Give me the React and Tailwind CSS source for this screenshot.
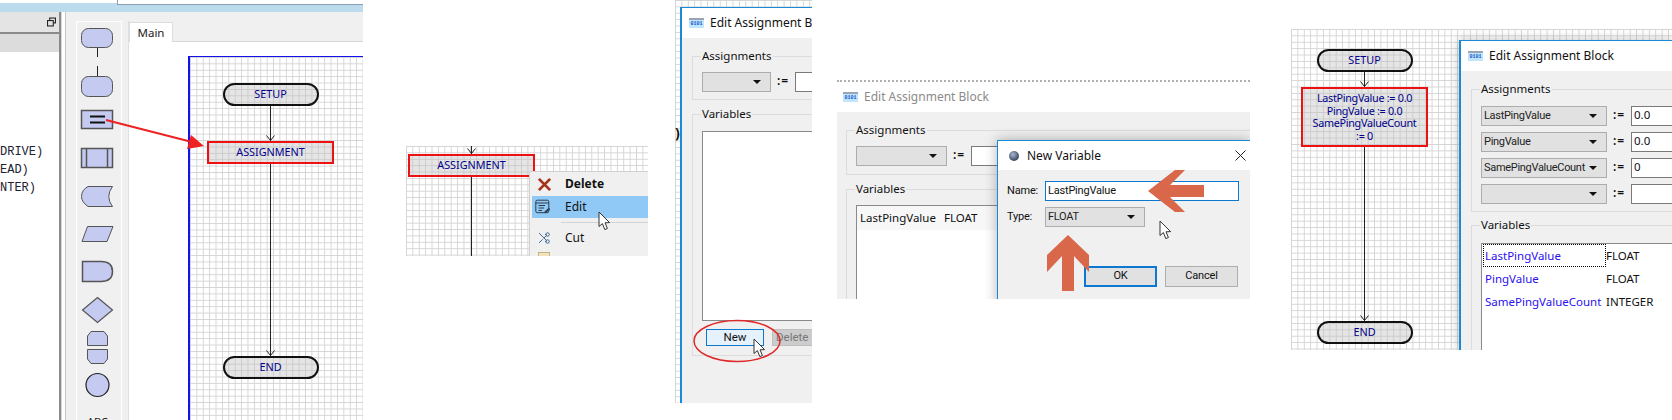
import { Scissors } from 'lucide-react';

const grid =
  'bg-white bg-[linear-gradient(#d4d4d4_1px,transparent_1px),linear-gradient(90deg,#d4d4d4_1px,transparent_1px)] bg-[size:6.4px_6.4px]';

function Cursor({ className }) {
  return (
    <svg viewBox="0 0 13 20" className={`absolute h-[20px] w-[13px] ${className}`}>
      <path
        d="M1 1 L1 15.5 L4.4 12.6 L6.8 18.6 L9.4 17.5 L7 11.8 L11.6 11.6 Z"
        fill="#fff"
        stroke="#333"
        strokeWidth="1"
        strokeLinejoin="round"
      />
    </svg>
  );
}

function Pill({ children }) {
  return (
    <div className="flex h-[23px] w-[96px] items-center justify-center rounded-full border-2 border-[#111] bg-[#bdbdbd]/40 text-[10.8px] text-[#00008b]">
      {children}
    </div>
  );
}

function Connector({ className }) {
  return (
    <div className={`relative w-px bg-[#222] ${className}`}>
      <svg viewBox="0 0 9 6" className="absolute bottom-0 -left-[4px] h-[6px] w-[9px]">
        <path d="M0.5 0.5 L4.5 5.5 L8.5 0.5" fill="none" stroke="#222" strokeWidth="1" />
      </svg>
    </div>
  );
}

function AssignBox({ className, children }) {
  return (
    <div
      className={`flex w-[127px] flex-col items-center justify-center border-2 border-[#ee1111] bg-[#bdbdbd]/40 text-[10.8px] text-[#00008b] ${className}`}
    >
      {children}
    </div>
  );
}

function Palette() {
  const f = '#c5caf0';
  const s = '#555';
  return (
    <svg viewBox="0 0 45 398" className="h-[398px] w-[45px] overflow-visible">
      <g fill={f} stroke={s} strokeWidth="1">
        <rect x="4.5" y="6.5" width="31" height="19" rx="7" />
        <path d="M20.5 26 V35" stroke="#222" />
        <path d="M20.5 44 V54" stroke="#222" />
        <rect x="4.5" y="54.5" width="31" height="20" rx="7" />
        <rect x="4.5" y="88.5" width="31" height="18" strokeWidth="1.5" />
        <path d="M13 94.5 H28 M13 100.5 H28" stroke="#111" strokeWidth="2" />
        <rect x="4.5" y="126.5" width="31" height="19" strokeWidth="1.5" />
        <path d="M9.5 127 V145 M30.5 127 V145" strokeWidth="1.5" />
        <path d="M11 164.5 H35.5 Q28 174.5 35.5 184.5 H11 Q4.5 180 4.5 174.5 Q4.5 168 11 164.5 Z" />
        <path d="M10.5 204.5 H36 L30 219.5 H5 Z" />
        <path d="M5.5 239.5 H24 Q35.5 239.5 35.5 249.5 Q35.5 259.5 24 259.5 H5.5 Z" strokeWidth="1.5" />
        <path d="M20.5 275.5 L35.5 288 L20.5 300.5 L5.5 288 Z" strokeWidth="1.2" />
        <path d="M10.5 323.5 V314 L14 309.5 H27 L30.5 314 V323.5 Z" />
        <path d="M10.5 327.5 H30.5 V337 L27 341.5 H14 L10.5 337 Z" />
        <circle cx="20.5" cy="363" r="11.5" strokeWidth="1.2" stroke="#222" />
      </g>
      <text x="20.5" y="404" textAnchor="middle" fontSize="11" fill="#222">ABC</text>
    </svg>
  );
}

function DialogIcon() {
  return (
    <div className="flex h-[10px] w-[15px] shrink-0 items-center justify-center border-t-2 border-t-[#9aa4b4] bg-[#bfe6fb] font-['Liberation_Mono',monospace] text-[5px] leading-none font-bold text-[#1a50d0]">
      0101
    </div>
  );
}

function Select({ className, children }) {
  return (
    <div className={`flex h-[20px] items-center justify-between border border-[#adadad] bg-[#e1e1e1] pr-[9px] pl-[2px] font-['Roboto',sans-serif] text-[11px] tracking-[-0.3px] whitespace-nowrap text-[#222] ${className}`}>
      <span>{children}</span>
      <svg viewBox="0 0 8 4" className="h-[4px] w-[8px] shrink-0">
        <path d="M0 0 H8 L4 4 Z" fill="#111" />
      </svg>
    </div>
  );
}

function Assign() {
  return <div className="w-[11px] shrink-0 pb-[2px] text-[12px] leading-[14px] font-semibold tracking-[1px] text-[#111]">:=</div>;
}

function GroupLegend({ children }) {
  return (
    <span className="absolute -top-[9px] left-[8px] bg-[#f0f0f0] px-px text-[11.5px] leading-[16px] text-[#111]">
      {children}
    </span>
  );
}

function Arrow({ points }) {
  return (
    <svg viewBox="0 0 1672 420" className="pointer-events-none absolute top-0 left-0 h-[420px] w-[1672px]">
      <polygon points={points} fill="#d9674a" />
    </svg>
  );
}

function AppPanel() {
  return (
    <div className="absolute top-0 left-0 flex h-[420px] w-[363px] flex-col overflow-hidden">
      <div className="flex h-[12px] shrink-0 bg-[#bcdcee]">
        <div className="h-[3px] w-[117px] bg-white" />
        <div className="h-[5px] flex-1 border-b border-l border-[#8aa0b0] bg-white" />
      </div>
      <div className="flex h-[408px] shrink-0">
        <div className="flex w-[61px] shrink-0 flex-col border-r-2 border-[#8a8a8a] bg-white">
          <div className="flex h-[20px] shrink-0 items-center justify-end bg-[#e4e4e4] pr-[3px]">
            <svg viewBox="0 0 10 10" className="h-[10px] w-[9px]" fill="none" stroke="#222" strokeWidth="1.2">
              <rect x="3" y="0.6" width="6.4" height="5.4" />
              <rect x="0.6" y="3.4" width="6.4" height="6" fill="#e4e4e4" />
            </svg>
          </div>
          <div className="h-[2px] shrink-0 bg-[#8a8a8a]" />
          <div className="h-[18px] shrink-0 bg-[#dcdcdc]" />
          <div className="flex flex-col pt-[91px] font-['Liberation_Mono',monospace] text-[12px] leading-[18px] text-[#223]">
            <span>DRIVE)</span>
            <span>EAD)</span>
            <span>NTER)</span>
          </div>
        </div>
        <div className="flex flex-1 border-l border-[#d8d8d8] bg-white">
          <div className="ml-[3px] flex flex-1 border-l border-[#8a8a8a]/40 bg-[#f0f0f0] pt-[9px] pl-[10px]">
            <div className="h-[399px] w-[46px] shrink-0 border-x border-t border-white">
              <Palette />
            </div>
            <div className="ml-[6px] flex flex-1 flex-col border-l border-[#e0e0e0] bg-[#f0f0f0] pt-[1px]">
              <div className="flex h-[20px] shrink-0">
                <div className="flex w-[44px] items-center justify-center border-x border-t border-[#dcdcdc] bg-white text-[11.5px] text-[#222]">
                  Main
                </div>
                <div className="flex-1 border-b border-[#d8d8d8]" />
              </div>
              <div className="flex-1 bg-white pt-[14px] pl-[59px]">
                <div className={`h-[364px] border-t border-l-2 border-t-[#1010f0] border-l-[#1010f0] pt-[26px] pl-[17px] ${grid}`}>
                  <div className="flex w-[127px] flex-col items-center">
                    <Pill>SETUP</Pill>
                    <Connector className="h-[35px]" />
                    <AssignBox className="h-[23px]">ASSIGNMENT</AssignBox>
                    <Connector className="h-[192px]" />
                    <Pill>END</Pill>
                  </div>
                </div>
              </div>
            </div>
          </div>
        </div>
      </div>
      <svg viewBox="0 0 363 420" className="absolute top-0 left-0 h-[420px] w-[363px]">
        <path d="M106 120 L192 142" stroke="#ee2222" strokeWidth="2" />
        <polygon points="204,146 191,135 187,149" fill="#ee2222" />
      </svg>
    </div>
  );
}

function MenuPanel() {
  return (
    <div className={`absolute top-[146px] left-[406px] h-[110px] w-[242px] overflow-hidden ${grid}`}>
      <div className="ml-[2px] flex w-[127px] flex-col items-center">
        <Connector className="h-[8px]" />
        <AssignBox className="h-[23px]">ASSIGNMENT</AssignBox>
        <div className="h-[80px] w-px bg-[#222]" />
      </div>
      <div className="absolute top-[25px] left-[123px] flex h-[85px] w-[119px] flex-col border-t border-l border-[#d0d0d0] bg-[#f0f0f0] pl-[2px] text-[12px] text-[#111]">
        <div className="flex h-[24px] shrink-0 items-center">
          <svg viewBox="0 0 16 16" className="ml-[5px] h-[15px] w-[15px]">
            <path d="M2 2 L14 14 M14 2 L2 14" stroke="#a8321c" strokeWidth="3" />
          </svg>
          <span className="ml-[13px] font-bold">Delete</span>
        </div>
        <div className="flex h-[22px] shrink-0 items-center bg-[#90c8f6]">
          <svg viewBox="0 0 16 16" className="ml-[3px] h-[16px] w-[16px]" fill="none" stroke="#2e3b4a" strokeWidth="1">
            <rect x="0.8" y="1.2" width="13" height="12.5" rx="1.5" />
            <path d="M0.8 4 H13.8 M3.5 6.5 H10 M3.5 9 H9 M3.5 11.5 H7" />
            <path d="M10 13.5 L14.5 9.5" strokeWidth="2" />
          </svg>
          <span className="ml-[14px]">Edit</span>
        </div>
        <div className="mt-[4px] ml-[29px] h-px shrink-0 bg-[#d4d4d4]" />
        <div className="mt-[4px] flex h-[22px] shrink-0 items-center">
          <Scissors className="ml-[5px] h-[14px] w-[14px] -scale-x-100 text-[#35618c]" strokeWidth={1.6} />
          <span className="ml-[14px]">Cut</span>
        </div>
        <div className="mt-[3px] ml-[6px] h-[10px] w-[12px] shrink-0 border border-[#c9b27a] bg-[#efe3c0]" />
      </div>
      <Cursor className="top-[65px] left-[192px]" />
    </div>
  );
}

function EmptyDialogPanel() {
  return (
    <div className={`absolute top-0 left-[675px] h-[403px] w-[137px] overflow-hidden ${grid}`}>
      <span className="absolute top-[122px] left-0 text-[14px] font-bold text-[#111]">)</span>
      <div className="absolute top-[7px] left-[5px] flex h-[396px] w-[140px] flex-col border-t border-l-2 border-[#1a8ad8] bg-white">
        <div className="flex h-[30px] shrink-0 items-center gap-[6px] pl-[7px] text-[12px] whitespace-nowrap text-[#111]">
          <DialogIcon />
          <span>Edit Assignment Block</span>
        </div>
        <div className="min-h-0 flex-1 bg-[#f0f0f0] pt-[18px] pl-[10px]">
          <div className="relative h-[44px] border border-r-0 border-[#dcdcdc] pt-[15px] pl-[9px]">
            <GroupLegend>Assignments</GroupLegend>
            <div className="flex items-center">
              <Select className="w-[69px] shrink-0" />
              <div className="ml-[6px]"><Assign /></div>
              <div className="ml-[7px] h-[20px] w-[40px] shrink-0 border border-[#7a7a7a] bg-white" />
            </div>
          </div>
          <div className="relative mt-[14px] h-[242px] border border-r-0 border-[#dcdcdc] pt-[16px] pl-[9px]">
            <GroupLegend>Variables</GroupLegend>
            <div className="h-[190px] border border-r-0 border-[#8a8a8a] bg-white" />
            <div className="mt-[8px] flex gap-[8px] pl-[4px] font-['Roboto',sans-serif] text-[11.5px]">
              <div className="flex h-[17px] w-[58px] shrink-0 items-center justify-center border border-[#0d78d0] bg-[#e5f1fb] text-[#111]">New</div>
              <div className="flex h-[17px] w-[50px] shrink-0 items-center border border-[#bfbfbf] bg-[#cccccc] pl-[3px] text-[#777]">Delete</div>
            </div>
          </div>
        </div>
      </div>
      <svg viewBox="0 0 137 403" className="absolute top-0 left-0 h-[403px] w-[137px]">
        <ellipse cx="62" cy="341" rx="43" ry="20.5" fill="none" stroke="#e02828" strokeWidth="1.5" />
      </svg>
      <Cursor className="top-[338px] left-[78px]" />
    </div>
  );
}

function NewVariablePanel() {
  return (
    <div className="absolute top-[80px] left-[837px] flex h-[219px] w-[413px] flex-col overflow-hidden border-t-2 border-dotted border-t-[#b0b0b0]">
      <div className="flex h-[30px] shrink-0 items-center gap-[6px] bg-white pl-[6px] text-[12px] text-[#8a8a8a]">
        <DialogIcon />
        <span>Edit Assignment Block</span>
      </div>
      <div className="relative min-h-0 flex-1 bg-[#f0f0f0] pt-[18px] pl-[9px]">
        <div className="relative h-[45px] border border-r-0 border-[#dcdcdc] pt-[15px] pl-[9px]">
          <GroupLegend>Assignments</GroupLegend>
          <div className="flex items-center">
            <Select className="w-[91px] shrink-0" />
            <div className="ml-[6px]"><Assign /></div>
            <div className="ml-[7px] h-[20px] w-[40px] border border-[#7a7a7a] bg-white" />
          </div>
        </div>
        <div className="relative mt-[14px] h-[120px] border border-r-0 border-[#dcdcdc] pt-[15px] pl-[9px]">
          <GroupLegend>Variables</GroupLegend>
          <div className="h-[100px] border border-r-0 border-[#8a8a8a] bg-white">
            <div className="flex h-[24px] items-center gap-[8px] bg-[#f7f7f7] pl-[3px] text-[11.5px] text-[#111]">
              <span>LastPingValue</span>
              <span>FLOAT</span>
            </div>
          </div>
        </div>
        <div className="absolute top-[28px] left-[160px] flex h-[170px] w-[253px] flex-col border-y border-l border-[#1a8ad8] bg-white shadow-[0_0_12px_rgba(0,0,0,0.3)]">
          <div className="flex h-[29px] shrink-0 items-center pr-[4px] pl-[8px] text-[12px] whitespace-nowrap text-[#111]">
            <svg viewBox="0 0 16 16" className="h-[16px] w-[16px] shrink-0">
              <defs>
                <radialGradient id="globe" cx="0.4" cy="0.35" r="0.7">
                  <stop offset="0" stopColor="#a8b8cc" />
                  <stop offset="1" stopColor="#2c3c58" />
                </radialGradient>
              </defs>
              <circle cx="8" cy="8" r="5" fill="url(#globe)" />
            </svg>
            <span className="ml-[5px]">New Variable</span>
            <svg viewBox="0 0 11 11" className="ml-auto h-[11px] w-[11px]">
              <path d="M0.5 0.5 L10.5 10.5 M10.5 0.5 L0.5 10.5" stroke="#222" strokeWidth="1" />
            </svg>
          </div>
          <div className="flex flex-1 flex-col bg-[#f0f0f0] pt-[11px] pl-[9px] font-['Roboto',sans-serif] text-[11px] tracking-[-0.2px] text-[#111]">
            <div className="flex h-[20px] items-center">
              <span className="w-[38px]">Name:</span>
              <div className="flex h-[20px] w-[194px] items-center border border-[#0d78d0] bg-white pl-[2px]">LastPingValue</div>
            </div>
            <div className="mt-[6px] flex h-[20px] items-center">
              <span className="w-[38px]">Type:</span>
              <Select className="w-[100px]">FLOAT</Select>
            </div>
            <div className="mt-[39px] ml-[77px] flex gap-[8px]">
              <div className="flex h-[21px] w-[73px] items-center justify-center border-2 border-[#0d78d0] bg-[#e1e1e1]">OK</div>
              <div className="flex h-[21px] w-[73px] items-center justify-center border border-[#adadad] bg-[#e1e1e1]">Cancel</div>
            </div>
          </div>
        </div>
      </div>
      <Cursor className="top-[138px] left-[322px]" />
    </div>
  );
}

function FilledPanel() {
  const rows = [
    ['LastPingValue', '0.0'],
    ['PingValue', '0.0'],
    ['SamePingValueCount', '0'],
    ['', ''],
  ];
  return (
    <div className={`absolute top-[29px] left-[1291px] h-[321px] w-[381px] overflow-hidden ${grid}`}>
      <div className="mt-[20px] ml-[10px] flex w-[127px] flex-col items-center">
        <Pill>SETUP</Pill>
        <Connector className="h-[15px]" />
        <AssignBox className="h-[60px] leading-[12.5px] tracking-[-0.3px]">
          <span>LastPingValue := 0.0</span>
          <span>PingValue := 0.0</span>
          <span>SamePingValueCount</span>
          <span>:= 0</span>
        </AssignBox>
        <Connector className="h-[174px]" />
        <Pill>END</Pill>
      </div>
      <div className="absolute top-[11px] left-[168px] flex h-[310px] w-[213px] flex-col border-t border-l-2 border-[#1a8ad8] bg-white shadow-[0_0_10px_rgba(0,0,0,0.25)]">
        <div className="flex h-[30px] shrink-0 items-center gap-[6px] pl-[7px] text-[12px] text-[#111]">
          <DialogIcon />
          <span>Edit Assignment Block</span>
        </div>
        <div className="min-h-0 flex-1 bg-[#f0f0f0] pt-[18px] pl-[10px]">
          <div className="relative h-[123px] border border-r-0 border-[#dcdcdc] pt-[16px] pl-[9px]">
            <GroupLegend>Assignments</GroupLegend>
            <div className="flex flex-col gap-[6px]">
              {rows.map(([name, value], i) => (
                <div key={i} className="flex items-center">
                  <Select className="w-[126px] shrink-0">{name}</Select>
                  <div className="ml-[6px]"><Assign /></div>
                  <div className="ml-[7px] h-[20px] w-[50px] shrink-0 border border-[#7a7a7a] bg-white pl-[2px] text-[11.5px] leading-[15px] text-[#111]">
                    {value}
                  </div>
                </div>
              ))}
            </div>
          </div>
          <div className="relative mt-[13px] h-[130px] border border-r-0 border-[#dcdcdc] pt-[17px] pl-[9px]">
            <GroupLegend>Variables</GroupLegend>
            <div className="h-[120px] border-t border-l border-[#8a8a8a] bg-white pl-px text-[11.5px]">
              <div className="grid grid-cols-[123px_1fr] grid-rows-[23px_23px_23px] items-center text-[#111]">
                <span className="flex h-[23px] items-center border border-dotted border-black pl-px text-[#2a10f0]">LastPingValue</span>
                <span>FLOAT</span>
                <span className="pl-[2px] text-[#2a10f0]">PingValue</span>
                <span>FLOAT</span>
                <span className="pl-[2px] text-[#2a10f0]">SamePingValueCount</span>
                <span>INTEGER</span>
              </div>
            </div>
          </div>
        </div>
      </div>
    </div>
  );
}

export default function App() {
  return (
    <div className="relative h-[420px] w-[1672px] overflow-hidden bg-white font-['Noto_Sans','Open_Sans',sans-serif]">
      <AppPanel />
      <MenuPanel />
      <EmptyDialogPanel />
      <NewVariablePanel />
      <Arrow points="1148,191 1175,170 1185,170 1170,185 1204,185 1204,197 1170,197 1185,212 1175,212" />
      <Arrow points="1068,235 1089,255 1089,272 1074,256 1074,291 1062,291 1062,256 1047,272 1047,255" />
      <FilledPanel />
    </div>
  );
}
